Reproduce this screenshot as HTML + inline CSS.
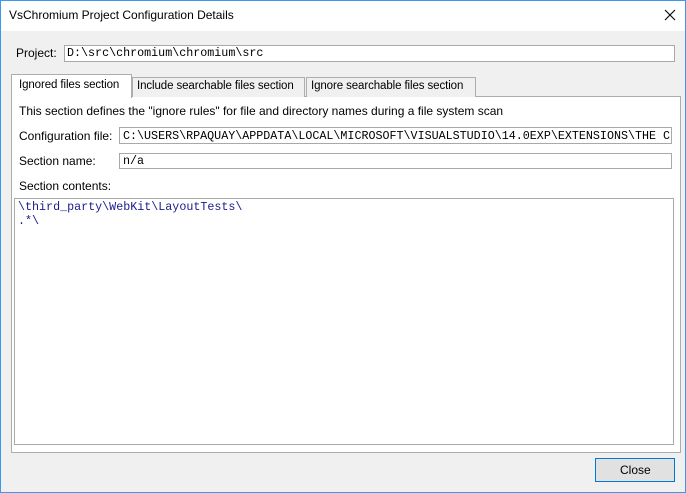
<!DOCTYPE html>
<html><head><style>
*{box-sizing:border-box;margin:0;padding:0}
body{width:686px;height:493px;background:#f0f0f0;font-family:"Liberation Sans",sans-serif;font-size:12px;color:#000;position:relative;overflow:hidden}
.frame{position:absolute;left:0;top:0;width:686px;height:493px;border:1px solid #3c98e8}
.title{position:absolute;left:1px;top:1px;width:684px;height:30px;background:#fff}
.a{position:absolute;white-space:nowrap}
.in{position:absolute;background:#fff;border:1px solid #a9a9a9}
.mono{font-family:"Liberation Mono",monospace;font-size:11.7px}
.tab{position:absolute;top:77px;height:20px;background:#f0f0f0;border:1px solid #adadad;border-bottom:none;padding:2px 0 0 4px;font-size:11.5px;letter-spacing:-0.1px;white-space:nowrap;overflow:hidden}
</style></head><body>
<div class="frame"></div>
<div class="title"></div>
<div class="a" style="left:9px;top:8px;font-size:12px">VsChromium Project Configuration Details</div>
<svg class="a" style="left:664px;top:9px" width="12" height="12"><path d="M1 1L11 11M11 1L1 11" stroke="#000" stroke-width="1.1"/></svg>
<div class="a" style="left:16px;top:46px">Project:</div>
<div class="in" style="left:64px;top:45px;width:611px;height:17px"></div>
<div class="a mono" style="left:67px;top:46px">D:\src\chromium\chromium\src</div>
<div style="position:absolute;left:11px;top:96px;width:670px;height:357px;background:#fff;border:1px solid #adadad"></div>
<div class="tab" style="left:132px;width:173px">Include searchable files section</div>
<div class="tab" style="left:306px;width:170px">Ignore searchable files section</div>
<div style="position:absolute;left:11px;top:74px;width:121px;height:24px;background:#fff;border:1px solid #adadad;border-bottom:none"></div>
<div class="a" style="left:19px;top:79px;font-size:11.5px;letter-spacing:-0.1px">Ignored files section</div>
<div class="a" style="left:19px;top:104px">This section defines the "ignore rules" for file and directory names during a file system scan</div>
<div class="a" style="left:19px;top:129px">Configuration file:</div>
<div class="in" style="left:119px;top:127px;width:553px;height:17px;overflow:hidden"><div class="a mono" style="left:3px;top:1px">C:\USERS\RPAQUAY\APPDATA\LOCAL\MICROSOFT\VISUALSTUDIO\14.0EXP\EXTENSIONS\THE CHROMIUM</div></div>
<div class="a" style="left:19px;top:154px">Section name:</div>
<div class="in" style="left:119px;top:153px;width:553px;height:16px"></div>
<div class="a mono" style="left:123px;top:154px">n/a</div>
<div class="a" style="left:19px;top:179px">Section contents:</div>
<div class="in" style="left:14px;top:198px;width:660px;height:247px"></div>
<div class="a mono" style="left:18px;top:200px;color:#1a1a8c;line-height:14px">\third_party\WebKit\LayoutTests\<br>.*\</div>
<div style="position:absolute;left:595px;top:458px;width:80px;height:24px;background:#e1e1e1;border:1px solid #0078d7"></div>
<div class="a" style="left:620px;top:463px">Close</div>
</body></html>
